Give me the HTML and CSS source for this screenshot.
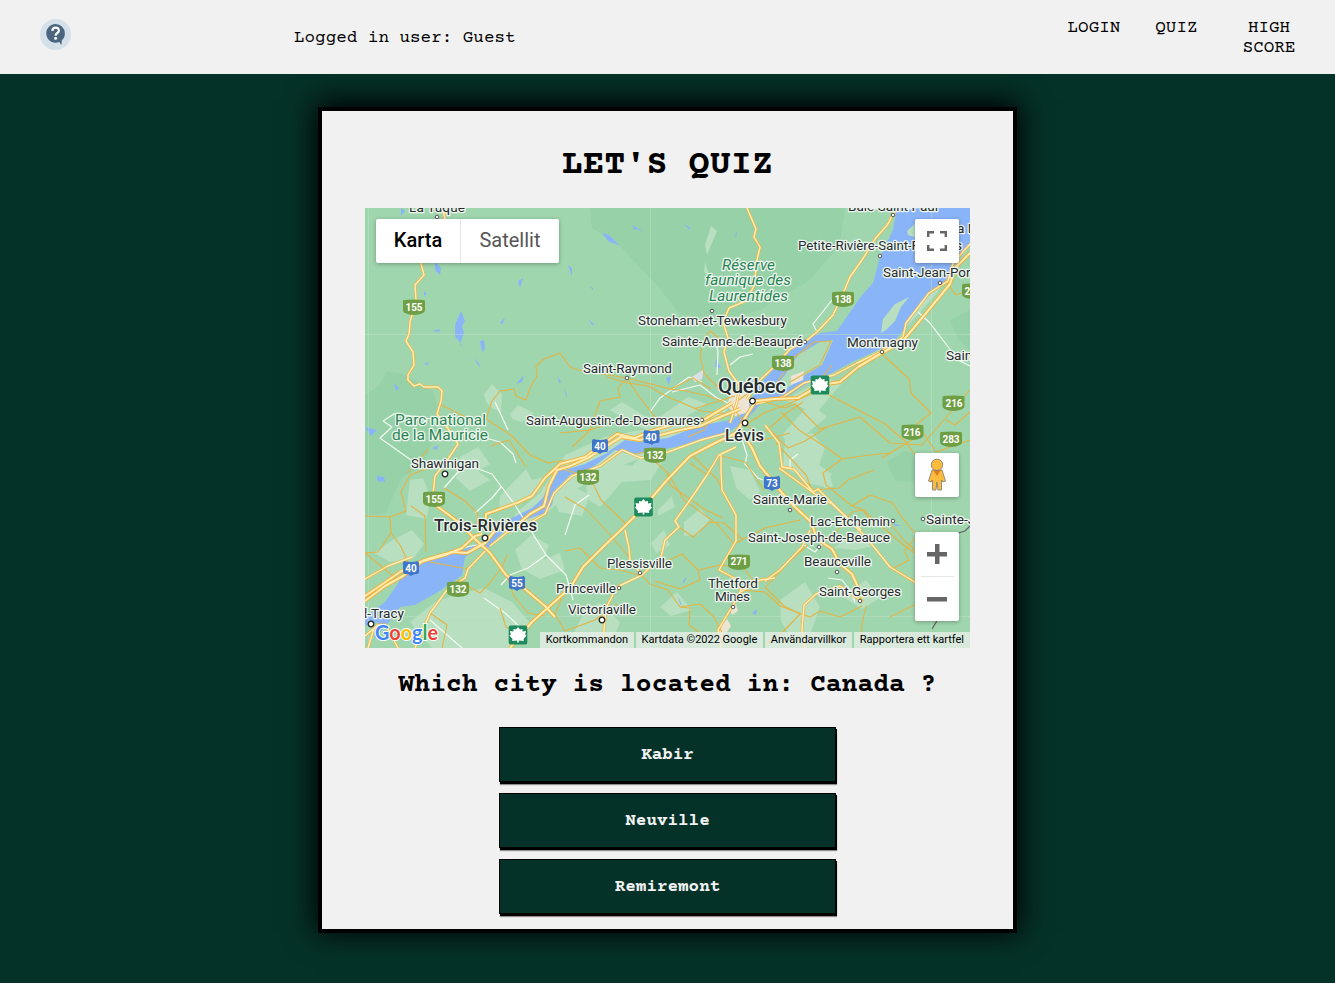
FILE: index.html
```html
<!DOCTYPE html>
<html lang="en">
<head>
<meta charset="utf-8">
<title>Let's Quiz</title>
<link rel="stylesheet" href="styles.css">
</head>
<body>
<header class="topbar">
  <svg class="logo" viewBox="0 0 31 31" role="img" aria-label="Quiz">
    <circle cx="15.5" cy="15.5" r="15.5" fill="#d4e1eb"/>
    <path d="M15.5 5a9.4 9.4 0 0 1 9.400 9.400c0 3-1.300 5.100-3 6.800l-.5 4.800-2.200-2.900A9.400 9.400 0 1 1 15.500 5z" fill="#4c657e"/>
    <path d="M12.300 11.900c.2-4.500 6.900-4.200 6.600-.3-.1 2.400-3.200 2.700-3.300 5" fill="none" stroke="#fff" stroke-width="2.200"/>
    <circle cx="15.600" cy="19.300" r="1.500" fill="#fff"/>
  </svg>
  <p class="user">Logged in user: Guest</p>
  <nav class="nav"><a>LOGIN</a><a>QUIZ</a><a class="nav-score">HIGH SCORE</a></nav>
</header>
<main class="card">
  <h1 class="title">LET'S QUIZ</h1>
  <div class="map">
    <svg class="map-canvas" viewBox="365 208 605 440">
      <defs>
        <g id="town"><circle r="1.800" fill="#fff" stroke="#555" stroke-width="1"/></g>
        <g id="city"><circle r="2.800" fill="#fff" stroke="#222" stroke-width="1.300"/></g>
        <path id="green" d="M-10-7Q0-8 10-7Q11-7 11-5V3Q11 5 9 6Q5 8 0 8Q-5 8-9 6Q-11 5-11 3V-5Q-11-7-10-7Z" fill="#6f9f45"/>
        <path id="blue" d="M-7-7Q0-5 7-7Q9-5 8-2V4Q8 6 5 6Q2 6 0 8Q-2 6-5 6Q-8 6-8 4V-2Q-9-5-7-7Z" fill="#3f76c8"/>
        <g id="leaf"><rect x="-9.300" y="-9.500" width="18.600" height="19" rx="2" fill="#1f8a5d"/><path d="M0-8L2-5.500 4.500-6 4.500-3.500 8-4 7.200-.5 8.500.5 5.500 4 5.800 6 .8 5.500V7.500H-.8V5.500L-5.800 6-5.500 4-8.500.5-7.200-.5-8-4-4.500-3.500-4.500-6-2-5.500z" fill="#fff"/></g>
        <g id="highways">
          <path d="M365 596L377 588 400 572 420 562 445 555 462 548 475 536 482 534"/>
          <path d="M365 601L385 586 403 576 424 560 452 552 467 553 485 543 497 528 510 531 530 514 544 506 549 486 557 470 570 466 588 458 605 447 621 437 640 440 656 436 680 430 700 426 720 417 740 409"/>
          <path d="M485 531L486 514 517 503 532 496 545 478 560 464 585 457 604 443 617 434 635 438 651 431 675 424 705 419 732 403"/>
          <path d="M434 504L457 521 475 539 490 553 506 575 520 585 545 606 555 617"/>
          <path d="M510 648L532 622 570 588 583 567 602 548 626 525 643 508 667 480 690 456 715 443 736 433"/>
          <path d="M736 433L748 413 756 401 774 399 798 398 820 385 840 382 858 367 880 354 902 342 927 312 950 284 956 267 970 253"/>
          <path d="M740 430L752 448 760 466 772 480 782 493 795 507 811 522 817 539 832 549 840 564 852 574 863 598"/>
        </g>
        <g id="majors">
          <path d="M442 208L445 218 421 264 424 275 415 285 416 300 410 322 409 334 406 341 413 352 414 365 408 375 408 380 414 386 420 384 424 387 438 387 442 391 441 401 437 414 447 427 458 444 446 462 435 476 433 494"/>
          <path d="M747 208L756 229 754 237 760 247 757 260 754 286 746 301 729 308 723 322 728 338 724 352 729 371 740 386 737 402 730 423"/>
          <path d="M896 208L888 224 875 239 864 257 850 277 842 296 833 315 818 331 806 341 790 349 774 367 760 380 747 399"/>
          <path d="M970 244L953 263 948 281 929 293 906 323 903 337 880 352 857 363 834 375 804 383 783 397 756 404"/>
          <path d="M721 455L721 471 722 490 736 515 736 541 719 570 740 581"/>
          <path d="M740 581L741 590 732 607 718 630 721 648M741 592L760 580 775 578"/>
          <path d="M736 447L719 455 707 475 690 500 675 521 679 527 665 540 661 557 642 575 617 587 606 608 604 630 602 648"/>
          <path d="M625 530L629 548 630 560 641 574M765 425L779 443 782 467 794 469 813 492 818 489 846 517 866 537 890 567 918 584"/>
          <path d="M779 468L815 494 832 504 861 530M810 530L802 547 780 570 765 581M863 602L840 586 816 594 804 605 802 630 805 648"/>
          <path d="M488 548L468 569 465 578 447 590 430 613 415 648"/>
          <path d="M365 579L388 566 412 557M490 546L510 530 526 525 545 514 554 493 572 476 600 466 622 450 641 458 668 452 701 440 727 433"/>
          <path d="M365 636L378 625 386 625 398 648M374 628L368 648"/>
        </g>
        <g id="minors">
          <path d="M441 405L470 419M486 419L492 401 500 391 514 389 516 396 526 400 530 388 537 376 536 366 544 359 560 353 570 367 578 370 596 373 627 378 655 385 670 389 686 391 708 396 724 402"/>
          <path d="M627 378L618 388 620 397 600 401 590 430 560 433M627 378L640 398 660 423M607 377L628 383 648 386 668 397 701 411 728 414M694 409L709 404 735 396M669 390L693 378 711 389"/>
          <path d="M486 419L512 436 530 455 548 463 565 460M491 446L509 440 526 467M434 466L410 475 401 492 406 511 390 517 365 516M407 473L428 449M444 488L465 501 478 514 475 529M411 506L425 516 426 552M390 517L391 533 378 552 365 553M391 533L400 545 408 562"/>
          <path d="M365 553L398 580M457 580L480 593 490 583 502 567 507 555M506 575L514 596 528 613 545 616M500 608L506 627 520 633M468 569L430 562M430 613L447 625 442 648M565 551L580 548 600 568 620 570 642 576M565 497L587 510 611 536 630 558M565 470L590 477 601 500 626 524M572 447L590 430 620 420"/>
          <path d="M632 455L644 452 667 472 684 500 717 524 734 544 765 528 800 520M691 454L717 479 734 511M667 472L670 485 704 509 723 518M719 455L745 462 764 490M707 475L690 463M679 527L693 537 710 522 724 523 743 540M650 569L682 554 698 570 700 580 680 589 655 581M698 570L720 565 744 568 757 586"/>
          <path d="M640 573L650 584 668 590 680 607 690 608 689 625 700 633M680 607L700 604 714 617 730 648M565 590L555 614 565 631 595 620 617 604M741 590L765 592 780 606 810 617 820 611 840 617 862 606"/>
          <path d="M765 588L792 559 808 545M765 587L784 606 800 614 780 635 765 645M830 540L852 512 863 510 870 520 890 524 905 541 918 553M918 535L904 551 909 560 894 568"/>
          <path d="M765 425L788 448 805 441 827 427 860 417 890 443 922 445 970 390M880 352L909 379 911 393 931 413 917 424 936 452 970 440M765 402L785 408 795 404 820 429 850 420M824 392L835 398 862 412 885 424 905 441 915 455"/>
          <path d="M765 432L788 412 803 402M781 412L799 430 830 450 842 459 870 455 890 453M776 443L806 475 812 490 839 488 848 480 874 470M842 459L823 473 826 485 852 506 867 511M882 458L915 438M852 506L870 495 893 503 900 515 915 533M866 606L862 624 861 648M890 617L910 607 926 600"/>
          <path d="M732 406L742 420 763 440 790 433M745 425L766 412 786 405 809 395 834 382M945 280L956 295 970 290M946 420L955 425 970 412M800 398L825 374 832 365M775 385L795 357 814 342 831 341 820 365 790 382"/>
          <path d="M700 355L705 337 710 331 727 344M700 355L704 373 720 390 732 395M713 413L704 430 688 437M739 400L752 390M865 512L900 542 917 555"/>
        </g>
      </defs>
      <rect x="365" y="208" width="605" height="440" fill="#a0d6ae"/>
      <g fill="#96d1a8">
        <path d="M590 208H845L840 245 810 280 760 310 725 320 680 314 655 283 618 244 592 228Z"/>
        <path d="M365 395L379 386 387 371 400 373 413 380 433 391 441 420 423 465 401 478 386 513 365 516Z"/>
        <path d="M887 462L905 451 926 455 915 482 895 481ZM950 320L970 310V350L958 340Z"/>
      </g>
      <g fill="#b7dfc0">
        <path d="M484 394L492 384 502 394 501 412 492 408 486 402ZM510 414L518 405 534 413 522 422 512 419ZM610 410L622 402 643 415 655 420 688 397 707 404 682 419 647 430 630 422Z"/>
        <path d="M460 457L478 447 490 464 478 471 490 480 470 491 456 478ZM410 480L423 478 431 500 426 519 406 515ZM391 541L412 530 424 544 413 559 390 562 374 553ZM500 496L526 469 532 480 545 477 539 492 513 503 499 511Z"/>
        <path d="M515 550L531 535 549 545 543 560 560 553 565 570 540 579 522 569ZM410 622L435 602 458 594 484 588 512 602 532 625 508 648 432 648ZM553 498L572 486 590 495 582 516 559 512Z"/>
        <path d="M586 480L611 462 632 466 642 455 662 462 651 480 622 482 600 507 587 499ZM658 510L672 496 675 507 658 516ZM684 522L700 509 710 519 698 535 684 536Z"/>
        <path d="M730 466L750 470 760 491 750 500 736 488ZM785 440L812 433 825 448 819 465 832 474 825 487 808 483 797 474 783 467ZM785 400L825 378 842 383 819 410 827 417 811 430 790 447 782 435 805 409Z"/>
        <path d="M826 489L833 486 829 473 816 478ZM834 548L858 530 873 546 855 550ZM780 600L805 582 820 607 811 632 790 637 781 621ZM842 596L866 580 880 598 862 609ZM585 610L600 603 620 622 610 648 585 648 572 637Z"/>
        <path d="M565 455L605 437 635 431 672 427 702 417 735 399 719 421 684 442 651 454 623 465 600 475 565 496 548 512 509 535 515 514 540 493Z"/>
        <path d="M705 245L711 226 717 231 707 255ZM705 262L710 278 704 272ZM866 310L890 282 918 256 935 230 953 215 970 208V245L936 294 913 320 884 349 845 363 854 348ZM660 607L677 592 692 610 671 616ZM651 543L664 530 670 545 656 553Z"/>
      </g>
      <g fill="#8ab4f8">
        <path d="M897 208L893 230 880 257 873 283 862 295 848 315 837 331 820 333 808 338 793 348 778 365 765 378 756 391 750 402 745 412 732 420 708 424 688 430 668 438 638 442 625 440 605 454 585 464 565 470 558 470 550 482 543 498 532 508 512 518 498 528 485 540 475 545 455 553 428 560 402 575 397 585 385 602 365 617V626L378 622 392 608 415 605 438 592 453 582 462 575 465 557 480 547 488 548 498 537 508 528 525 520 545 513 552 505 555 490 570 475 592 468 605 458 615 450 632 455 648 452 675 447 705 438 730 431 745 421 757 408 765 400 785 398 805 385 832 373 852 362 872 353 893 343 905 328 918 308 932 292 945 282 952 268 970 245V208Z"/>
        <path d="M401 208L405 211 401 216ZM435 262L441 268 440 275 435 270ZM461 311L465 321 462 326 464 333 460 344 464 348 455 336 455 325ZM518 281L523 278 520 288ZM500 322L505 318 502 325ZM480 341L484 340 485 349 482 352ZM432 331L440 329 439 332ZM474 358L479 363 480 368ZM424 291L427 294 424 296ZM394 384L399 388 396 391ZM424 364L428 362 428 365ZM516 384L524 375 522 382ZM558 376L561 382 559 383ZM564 389L567 394 567 398ZM602 233L609 235 620 246 608 241ZM632 225L643 231 634 229ZM684 224L690 227 690 230ZM735 234L737 232 736 238ZM568 265L572 268 572 276ZM588 319L595 325 592 325ZM589 286L593 288 593 290ZM666 378L671 376 669 385ZM716 359L721 368 715 367Z"/>
        <path d="M377 476L384 477 385 482 377 481ZM432 448L438 445 437 450ZM377 612L403 603 391 620 374 639 378 622ZM678 595L682 606 680 604ZM683 580L687 577 683 584ZM752 613L757 609 756 615ZM893 523L901 526 895 526ZM365 427L377 430 371 436Z"/>
      </g>
      <path d="M833 340L822 365 805 375 785 390 772 390 785 375 798 355 820 342Z" fill="#addbb7"/>
      <path d="M881 333L883 319 895 304 909 297 901 307 895 321 886 330ZM907 231L917 222 929 219 923 240 908 235Z" fill="#b7dfc0"/>
      <g fill="#eee4d4"><path d="M791 376L804 371 803 380 791 385ZM732 390L750 394 749 412 735 416 727 405ZM718 630L727 619 731 626 720 642ZM730 609L736 604 738 611 732 615Z"/></g>
      <path d="M692 377L704 369 702 379 695 382Z" fill="#dcdfe5"/>
      <path d="M365 334.500H970M368.500 208V648M650.500 208V648M931.500 208V648M365 616.500H970" fill="none" stroke="#c1e3c7" stroke-width=".7" opacity=".65"/>
      <g class="local"><path d="M495 402L508 430M650 412L660 398 689 377 702 382M672 392L700 385 717 398 730 404M717 375L718 351 715 343M730 365L740 357 753 354M918 312L930 323 958 360 970 366M832 300L813 324 817 332M383 421L394 414 420 417 437 420M383 421L392 427 380 438 411 460M475 435L500 442 513 454 516 463M444 488L465 464 492 474 515 505 546 555 528 568 510 575 501 585M484 598L505 613 520 627M430 620L462 648M460 548L477 545 490 540M475 513L492 498 501 487M565 535L575 505 589 495M740 433L747 455 745 464 758 478 763 480M790 470L790 460 798 454M546 555L566 575 573 600M828 578L842 580 850 590 855 602M804 545L815 552 822 544"/></g>
      <use href="#minors" class="minor"/>
      <use href="#majors" class="major-edge"/><use href="#majors" class="major"/>
      <use href="#highways" class="highway-edge"/><use href="#highways" class="highway"/>
      <path d="M970 526L965 531 958 533M938 619L932 629" fill="none" stroke="#666" stroke-width="1.300"/>
      <g>
        <use href="#town" x="437" y="217"/><use href="#town" x="893" y="215"/><use href="#town" x="880" y="256"/><use href="#town" x="940" y="283"/><use href="#town" x="712" y="311"/><use href="#town" x="805" y="342"/><use href="#town" x="882" y="352"/><use href="#town" x="627" y="378"/><use href="#town" x="702" y="420"/><use href="#town" x="790" y="510"/><use href="#town" x="893" y="521"/><use href="#town" x="923" y="519"/><use href="#town" x="819" y="547"/><use href="#town" x="837" y="572"/><use href="#town" x="860" y="601"/><use href="#town" x="640" y="573"/><use href="#town" x="619" y="588"/><use href="#town" x="733" y="607"/>
        <use href="#city" x="752.500" y="401"/><use href="#city" x="745" y="423"/><use href="#city" x="445" y="474"/><use href="#city" x="485" y="538"/><use href="#city" x="602" y="620"/><use href="#city" x="371" y="624"/>
      </g>
      <g class="label">
        <text x="409" y="212" textLength="56">La Tuque</text>
        <text x="848" y="211" textLength="90">Baie-Saint-Paul</text>
        <text x="798" y="250" textLength="164">Petite-Rivière-Saint-François</text>
        <text x="957" y="233">a M</text>
        <text x="883" y="277" textLength="96">Saint-Jean-Port-</text>
        <text x="638" y="325" textLength="149">Stoneham-et-Tewkesbury</text>
        <text x="662" y="346" textLength="141">Sainte-Anne-de-Beaupré</text>
        <text x="847" y="346.500" textLength="71">Montmagny</text>
        <text x="946" y="360">Saint-</text>
        <text x="583" y="373" textLength="89">Saint-Raymond</text>
        <text x="526" y="424.500" textLength="174">Saint-Augustin-de-Desmaures</text>
        <text x="411" y="467.500" textLength="68">Shawinigan</text>
        <text x="753" y="504" textLength="74">Sainte-Marie</text>
        <text x="810" y="525.500" textLength="80">Lac-Etchemin</text>
        <text x="926" y="523.500">Sainte-Ju</text>
        <text x="748" y="542" textLength="142">Saint-Joseph-de-Beauce</text>
        <text x="804" y="566" textLength="67">Beauceville</text>
        <text x="819" y="595.500" textLength="82">Saint-Georges</text>
        <text x="607" y="567.500" textLength="65">Plessisville</text>
        <text x="556" y="593" textLength="60">Princeville</text>
        <text x="568" y="613.500" textLength="68">Victoriaville</text>
        <text x="708" y="588" textLength="50">Thetford</text>
        <text x="715" y="601" textLength="35">Mines</text>
        <text x="364" y="618" textLength="40">l-Tracy</text>
      </g>
      <g class="label label-city">
        <text class="label-capital" x="718" y="393" textLength="68">Québec</text>
        <text x="725" y="441" textLength="39">Lévis</text>
        <text x="434" y="531" textLength="103">Trois-Rivières</text>
      </g>
      <g class="label label-park">
        <text x="395" y="425" textLength="91">Parc national</text>
        <text x="392" y="440" textLength="96">de la Mauricie</text>
        <g font-style="italic"><text x="722" y="270" textLength="53">Réserve</text><text x="705" y="285" textLength="86">faunique des</text><text x="709" y="301" textLength="79">Laurentides</text></g>
      </g>
      <g>
        <use href="#green" x="414" y="307"/><use href="#green" x="434" y="499"/><use href="#green" x="458" y="589"/><use href="#green" x="588" y="477"/><use href="#green" x="655" y="455"/><use href="#green" x="843" y="299"/><use href="#green" x="783" y="363"/><use href="#green" x="953.500" y="403"/><use href="#green" x="912.500" y="432"/><use href="#green" x="951" y="439"/><use href="#green" x="739" y="562"/><use href="#green" x="973" y="291"/>
        <use href="#blue" x="600" y="446"/><use href="#blue" x="651.500" y="437"/><use href="#blue" x="772" y="483"/><use href="#blue" x="411" y="568"/><use href="#blue" x="517" y="583"/>
        <use href="#leaf" x="820" y="385"/><use href="#leaf" x="643.500" y="507"/><use href="#leaf" x="518" y="635"/>
      </g>
      <g class="route">
        <text x="414" y="311">155</text><text x="434" y="503">155</text><text x="458" y="593">132</text><text x="588" y="481">132</text><text x="655" y="459">132</text><text x="843" y="303">138</text><text x="783" y="367">138</text><text x="954" y="407">216</text><text x="912" y="436">216</text><text x="951" y="443">283</text><text x="739" y="565">271</text><text x="973" y="295">204</text><text x="600" y="450">40</text><text x="651" y="441">40</text><text x="772" y="487">73</text><text x="411" y="572">40</text><text x="517" y="587">55</text>
      </g>
      <text class="google" x="375" y="640" textLength="63" lengthAdjust="spacingAndGlyphs"><tspan fill="#4285f4">G</tspan><tspan fill="#ea4335">o</tspan><tspan fill="#fbbc04">o</tspan><tspan fill="#4285f4">g</tspan><tspan fill="#34a853">l</tspan><tspan fill="#ea4335">e</tspan></text>
    </svg>
    <div class="control map-type"><button class="type-active">Karta</button><button>Satellit</button></div>
    <button class="control fullscreen" aria-label="Fullscreen"><svg viewBox="0 0 20 20"><path d="M1.200 6V1.200H7M13 1.200h5.800V6M18.800 14v4.800H13M7 18.800H1.200V14" fill="none" stroke="#666" stroke-width="2.400"/></svg></button>
    <button class="control pegman" aria-label="Street View"><svg viewBox="0 0 20 34"><path d="M5 12H15L18.500 23 16 24 14.500 22V32H11L10 24 9 32H5.500V22L4 24 1.500 23Z" fill="#fbbc3d" stroke="#777" stroke-width=".8"/><path d="M6 12h8l-4 6z" fill="#e27b26"/><circle cx="10" cy="6.800" r="5.700" fill="#fbbc3d" stroke="#777" stroke-width=".8"/></svg></button>
    <div class="control zoom"><button aria-label="Zoom in"><i class="plus"></i></button><button aria-label="Zoom out"><i class="minus"></i></button></div>
    <div class="legal"><span>Kortkommandon</span><span>Kartdata ©2022 Google</span><span>Användarvillkor</span><span>Rapportera ett kartfel</span></div>
  </div>
  <h2 class="question">Which city is located in: Canada ?</h2>
  <div class="answers"><button>Kabir</button><button>Neuville</button><button>Remiremont</button></div>
</main>
</body>
</html>
```
FILE: styles.css
```css
* { box-sizing: border-box; }
body { margin: 0; min-height: 983px; background: #053228; color: #000; font-family: "Courier Prime", "Nimbus Mono PS", "FreeMono", "Liberation Mono", "Courier New", monospace; }
button { border: 0; padding: 0; margin: 0; font: inherit; }
.topbar { display: flex; align-items: flex-start; height: 74px; padding: 0 39.5px 0 40px; background: #f1f1f1; font-size: 17.6px; line-height: 20px; }
.logo { width: 31px; height: 31px; margin-top: 19px; }
.user { margin: 28px 0 0 223px; }
.nav { display: flex; gap: 35px; margin: 18px 0 0 auto; text-align: center; }
.nav-score { width: 53px; margin-left: 10px; }
.card { display: flex; flex-direction: column; align-items: center; width: 699px; height: 826px; margin: 33px auto 50px; border: 4px solid #000; background: #f1f1f1; box-shadow: 0 -3px 28px 3px #000; }
.topbar { position: relative; z-index: 1; }
.title { margin: 34px 0 0; height: 63px; font-size: 35.2px; line-height: 40px; }
.map { position: relative; width: 605px; height: 440px; overflow: hidden; font-family: Roboto, sans-serif; }
.map-canvas { display: block; width: 605px; height: 440px; }
.minor, .local, .major, .major-edge, .highway, .highway-edge { fill: none; stroke-linejoin: round; }
.minor { stroke: #e3b444; stroke-width: 1.1; }
.local { stroke: #f5faf2; stroke-width: 1.2; }
.major-edge { stroke: #f1b33f; stroke-width: 2.8; }
.major { stroke: #fff0bd; stroke-width: 1.4; }
.highway-edge { stroke: #efae35; stroke-width: 3.8; }
.highway { stroke: #ffecb0; stroke-width: 2.1; }
.label { font-size: 13.6px; fill: #262b2d; stroke: #eef6ef; stroke-width: 2.6px; stroke-linejoin: round; paint-order: stroke; }
.label-city { font-size: 16.5px; font-weight: 500; }
.label-capital { font-size: 20.5px; }
.label-park { font-size: 15.4px; fill: #278451; }
.route { font-size: 10px; font-weight: 700; text-anchor: middle; fill: #fff; }
.google { font-family: Lato, Roboto, sans-serif; font-size: 21px; font-weight: 700; stroke: #fff; stroke-width: 2px; paint-order: stroke; }
.control { position: absolute; display: flex; align-items: center; justify-content: center; background: #fff; border-radius: 2px; box-shadow: 0 1px 4px rgba(0, 0, 0, .3); }
.control button { background: transparent; }
.map-type { left: 11px; top: 11px; width: 183px; height: 44px; font-size: 20px; color: #565656; }
.map-type button { flex: 1; height: 44px; padding-bottom: 2px; color: #565656; }
.map-type .type-active { flex: 0 0 85px; border-right: 1px solid #e6e6e6; color: #000; font-weight: 500; }
.fullscreen, .pegman { right: 11px; width: 44px; height: 44px; }
.fullscreen { top: 11px; }
.fullscreen svg { width: 20px; height: 20px; }
.pegman { top: 245px; }
.pegman svg { width: 20px; height: 34px; }
.zoom { right: 11px; top: 324px; width: 44px; height: 89px; flex-direction: column; }
.zoom button { display: grid; place-items: center; width: 33px; height: 44px; }
.zoom button + button { height: 45px; border-top: 1px solid #e6e6e6; }
.plus, .minus { display: block; width: 20px; height: 20px; background: linear-gradient(#666, #666) center / 20px 4.5px no-repeat; }
.plus { background: linear-gradient(#666, #666) center / 20px 4.5px no-repeat, linear-gradient(#666, #666) center / 4.5px 20px no-repeat; }
.legal { position: absolute; right: 0; bottom: 0; display: flex; height: 16px; gap: 1.5px; font-size: 11px; line-height: 15px; white-space: nowrap; }
.legal span { padding: 0 6px; background: rgba(235, 241, 235, .76); }
.question { margin: 22px 0 0; height: 57px; font-size: 26.4px; line-height: 30px; white-space: pre; }
.answers { display: flex; flex-direction: column; gap: 11px; }
.answers button { width: 337px; height: 55px; border: 1px solid #000; background: #053228; color: #f1f1f1; font-size: 17.6px; font-weight: 700; box-shadow: 1px 2px 0 #000, 1px 3px 1px rgba(0, 0, 0, .4); }
```
